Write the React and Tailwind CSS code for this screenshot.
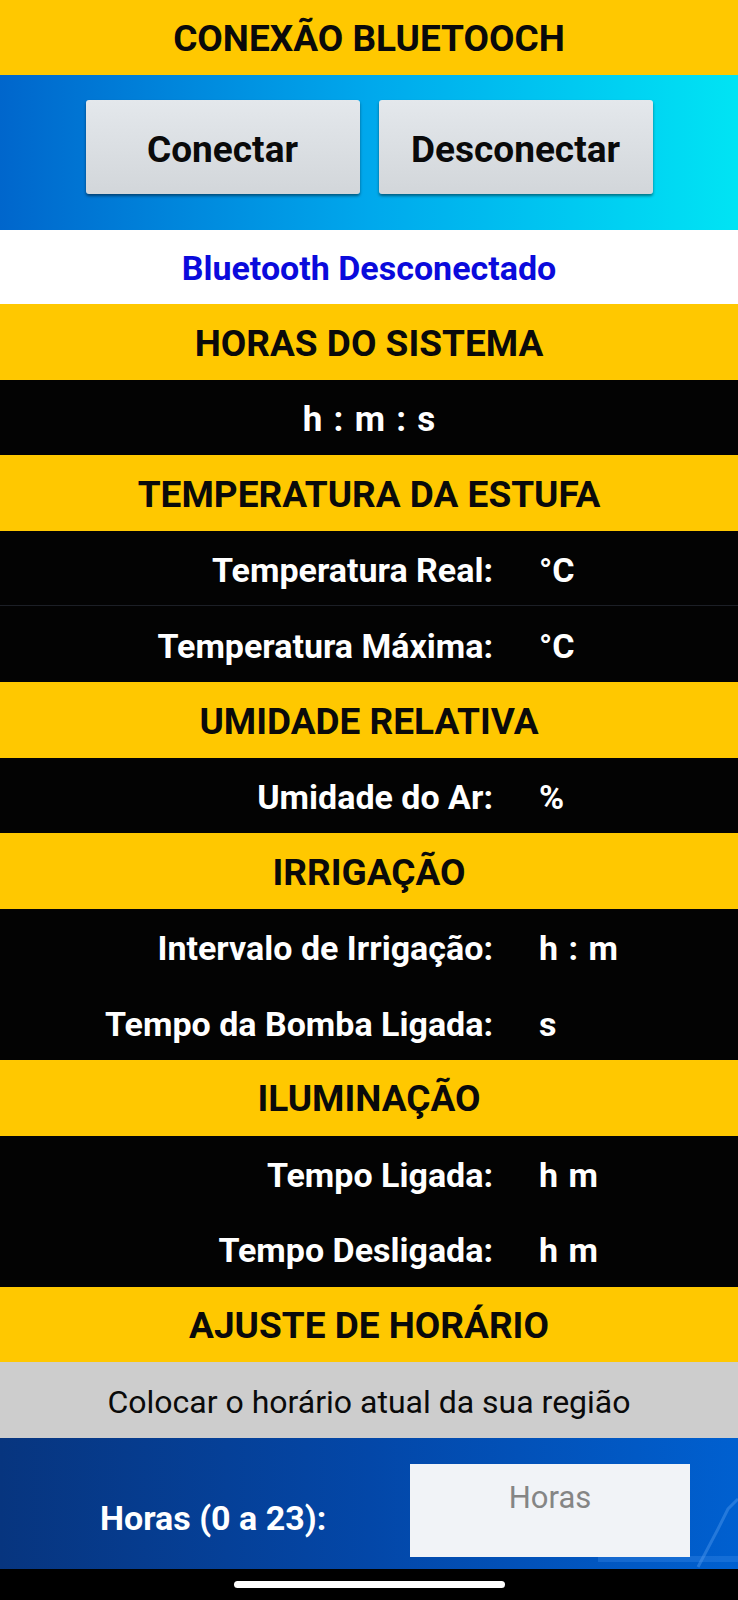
import React from "react";

const font = { fontFamily: "Roboto, 'Noto Sans', 'Liberation Sans', sans-serif" };

function Title({ children }) {
  return (
    <div className="h-[75.6px] bg-[#ffc800] flex items-center justify-center pt-[3px]">
      <span className="text-[37px] font-bold text-[#0a0a0a]">{children}</span>
    </div>
  );
}

function Row({ label, value, border }) {
  return (
    <div className={"h-[75.6px] bg-[#030303] grid grid-cols-[493px_1fr] items-center pt-[4px] " + (border ? "border-b border-[#1c1f26]" : "")}>
      <span className="text-right text-[34px] font-bold text-white">{label}</span>
      <span className="pl-[46px] text-[34px] font-bold text-white [word-spacing:2px]">{value}</span>
    </div>
  );
}

export default function App() {
  return (
    <div className="w-[738px] h-[1600px] bg-black flex flex-col overflow-hidden" style={font}>
      <div className="h-[75px] bg-[#ffc800] flex items-center justify-center pt-[3px]">
        <span className="text-[37px] font-bold text-[#0a0a0a]">CONEXÃO BLUETOOCH</span>
      </div>
      <div className="h-[155px] bg-gradient-to-r from-[#0066cc] via-[#00a8ec] to-[#00e4f4] flex items-start justify-center gap-[19px] pt-[25px]">
        <button className="w-[274px] h-[94px] rounded-[3px] bg-gradient-to-b from-[#e4e8ec] to-[#d2d6da] shadow-[0_2px_3px_rgba(0,0,0,0.45)] text-[37px] font-bold text-[#0a0a0a] pt-[5px]">
          Conectar
        </button>
        <button className="w-[274px] h-[94px] rounded-[3px] bg-gradient-to-b from-[#e4e8ec] to-[#d2d6da] shadow-[0_2px_3px_rgba(0,0,0,0.45)] text-[37px] font-bold text-[#0a0a0a] pt-[5px]">
          Desconectar
        </button>
      </div>
      <div className="h-[74px] bg-white flex items-center justify-center pt-[3px]">
        <span className="text-[34px] font-bold text-[#0a0adc]">Bluetooth Desconectado</span>
      </div>
      <Title>HORAS DO SISTEMA</Title>
      <div className="h-[75.6px] bg-[#030303] flex items-center justify-center pt-[5px]">
        <span className="text-[35px] font-bold text-white [word-spacing:2.5px]">h : m : s</span>
      </div>
      <Title>TEMPERATURA DA ESTUFA</Title>
      <Row label="Temperatura Real:" value="°C" border />
      <Row label="Temperatura Máxima:" value="°C" />
      <Title>UMIDADE RELATIVA</Title>
      <Row label="Umidade do Ar:" value="%" />
      <Title>IRRIGAÇÃO</Title>
      <Row label="Intervalo de Irrigação:" value="h : m" />
      <Row label="Tempo da Bomba Ligada:" value="s" />
      <Title>ILUMINAÇÃO</Title>
      <Row label="Tempo Ligada:" value="h m" />
      <Row label="Tempo Desligada:" value="h m" />
      <Title>AJUSTE DE HORÁRIO</Title>
      <div className="h-[75.6px] bg-[#cdcdcd] flex items-center justify-center pt-[3px]">
        <span className="text-[32px] text-[#0a0a0a]">Colocar o horário atual da sua região</span>
      </div>
      <div className="relative h-[131px] bg-gradient-to-r from-[#07357f] via-[#0347a8] to-[#0060d0] flex items-start overflow-hidden">
        <svg className="absolute right-0 bottom-0" width="140" height="80" viewBox="0 0 140 80">
          <path d="M0 70 L140 70" stroke="#3a8ae8" strokeWidth="6" opacity="0.35" />
          <path d="M100 78 L120 40 L130 20 L140 10" stroke="#5aa0f0" strokeWidth="3" fill="none" opacity="0.4" />
        </svg>
        <div className="relative w-[410px] h-full flex items-center pl-[100px] pt-[30px]">
          <span className="text-[34px] font-bold text-white">Horas (0 a 23):</span>
        </div>
        <div className="relative mt-[26px] w-[280px] h-[93px] bg-[#f1f3f7] flex justify-center pt-[11px]">
          <span className="text-[31px] text-[#858585]">Horas</span>
        </div>
      </div>
      <div className="flex-1 bg-black flex justify-center pt-[12px]">
        <div className="w-[271px] h-[7px] rounded-full bg-white" />
      </div>
    </div>
  );
}
